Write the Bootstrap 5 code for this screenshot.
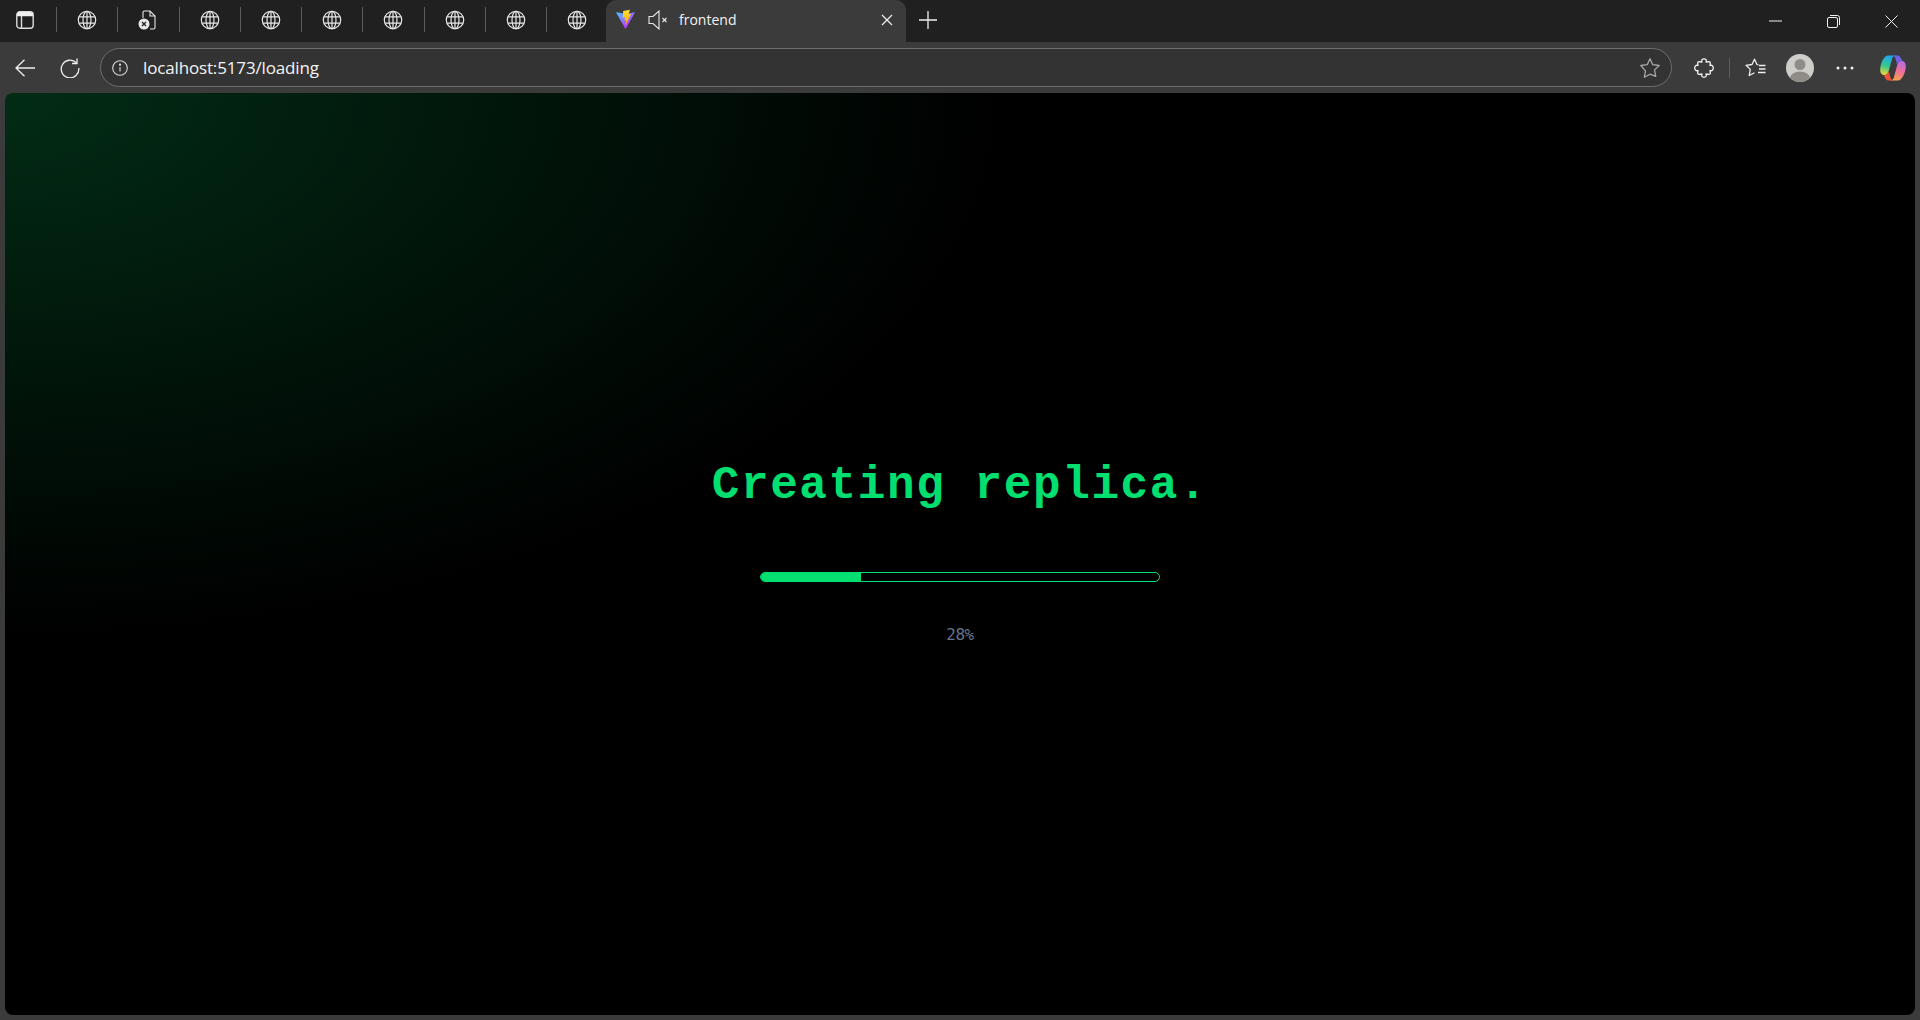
<!DOCTYPE html>
<html lang="en">
<head>
  <meta charset="UTF-8">
  <meta name="viewport" content="width=device-width, initial-scale=1.0">
  <title>frontend</title>
  <link href="https://cdn.jsdelivr.net/npm/bootstrap@5.3.0/dist/css/bootstrap.min.css" rel="stylesheet">
  <style>
    html, body { height: 100%; }
    body { background: #3b3b3b; overflow: hidden; font-family: "Open Sans", "Noto Sans", sans-serif; }
    svg { display: block; flex: none; }
    .browser { height: 1020px; }
    .tab-strip { height: 42px; background: #202020; }
    .slot-first { width: 56px; padding-right: 7px; }
    .slot { width: 60.25px; }
    .slot-sep { width: 1px; height: 25px; background: #5c5c5c; }
    .slot-end { width: 59px; }
    .strip-icon { margin-top: -3px; }
    .active-tab { width: 300px; height: 42px; background: #3b3b3b; border-radius: 10px 10px 0 0; padding: 0 13px 3px 9px; color: #f2f2f2; font-size: 14px; }
    .tab-mute { margin-left: 12px; }
    .tab-title { margin-left: 11px; }
    .new-tab { width: 44px; margin-top: -3px; }
    .win-btn { width: 58px; }
    .tool-strip { height: 51px; padding: 6px 0; }
    .back-btn { width: 50px; }
    .reload-btn { width: 40px; }
    .tool-btn { width: 45px; }
    .addr-bar { width: 1572px; height: 39px; margin: 0 9.5px 0 10px; background: #333; border: 1px solid #6e6e6e; border-radius: 20px; padding: 0 10px 0 11px; color: #f4f4f4; font-size: 17px; }
    .addr-text { margin-left: 15px; letter-spacing: -.15px; }
    .tool-sep { width: 1px; height: 20px; background: #5c5c5c; margin: 0 2.5px; }
    .copilot-btn { margin-left: 3px; }
    .viewport-box { width: 1910px; height: 922px; margin: 0 5px; padding-bottom: 1px; border-radius: 8px; background: radial-gradient(ellipse 1000px 545px at 0 0, #022c15 0%, #000 100%), #000; }
    .load-title { font-family: "Liberation Mono", monospace; font-weight: 700; font-size: 46px; letter-spacing: 1.6px; line-height: 48px; color: #00df6f; margin-bottom: 62px; }
    .load-track { width: 400px; height: 10px; background: #000; border: 1px solid #00df6f; border-radius: 5px; }
    .load-fill { background: #00df6f; }
    .load-pct { font-family: "DejaVu Sans Mono", monospace; font-size: 16px; letter-spacing: -.03em; line-height: 20px; color: #64748b; margin-top: 43px; }
  </style>
</head>
<body>
  <svg width="0" height="0" class="position-absolute">
    <defs>
      <symbol id="globe" viewBox="0 0 20 20">
        <g fill="none" stroke="#e8e8e8" stroke-width="1.2">
          <circle cx="10" cy="10" r="8.7"/>
          <ellipse cx="10" cy="10" rx="4" ry="8.7"/>
          <path d="M2.2 6.800h15.600M2.200 13.200h15.600M10 1.300v17.400"/>
        </g>
      </symbol>
      <linearGradient id="viteA" x1="2" y1="3" x2="18" y2="27" gradientUnits="userSpaceOnUse">
        <stop offset="0" stop-color="#41d1ff"/><stop offset="1" stop-color="#bd34fe"/>
      </linearGradient>
      <linearGradient id="viteB" x1="15" y1="1" x2="18" y2="24" gradientUnits="userSpaceOnUse">
        <stop offset="0" stop-color="#ffea83"/><stop offset=".08" stop-color="#ffdd35"/><stop offset="1" stop-color="#ffa800"/>
      </linearGradient>
      <linearGradient id="copA" x1="0.5" y1="0" x2="0.3" y2="1">
        <stop offset="0" stop-color="#1fa4f2"/><stop offset=".55" stop-color="#36c98a"/><stop offset="1" stop-color="#f2d43a"/>
      </linearGradient>
      <linearGradient id="copB" x1="0.7" y1="0" x2="0.4" y2="1">
        <stop offset="0" stop-color="#b56be8"/><stop offset=".5" stop-color="#f06f9a"/><stop offset="1" stop-color="#f7a24a"/>
      </linearGradient>
    </defs>
  </svg>

  <div class="browser d-flex flex-column">
    <div class="tab-strip d-flex align-items-center">
      <div class="slot-first strip-icon d-flex justify-content-center">
        <svg width="18" height="18" viewBox="0 0 18 18" fill="none" stroke="#dcdcdc" stroke-width="1.4"><rect x=".8" y=".8" width="16.4" height="16.4" rx="3"/><path d="M5.500 5v12"/><path d="M1 4c0-2 1-3 3-3h10c2 0 3 1 3 3v1.300H1z" fill="#f0f0f0" stroke="none"/></svg>
      </div>
      <div class="slot-sep strip-icon"></div>
      <div class="slot strip-icon d-flex justify-content-center"><svg width="20" height="20"><use href="#globe"/></svg></div>
      <div class="slot-sep strip-icon"></div>
      <div class="slot strip-icon d-flex justify-content-center">
        <svg width="20" height="20" viewBox="0 0 20 20" fill="none" stroke="#e8e8e8" stroke-width="1.1"><path d="M5 8V2.500A1.500 1.500 0 0 1 6.500 1h5.500l5 5v11.500a1.500 1.500 0 0 1-1.500 1.500H12"/><path d="M12 1v5h5"/><circle cx="6" cy="14" r="5.500" fill="#e8e8e8" stroke="none"/><path d="M4 12l4 4M8 12l-4 4" stroke="#202020" stroke-width="1.300"/></svg>
      </div>
      <div class="slot-sep strip-icon"></div>
      <div class="slot strip-icon d-flex justify-content-center"><svg width="20" height="20"><use href="#globe"/></svg></div>
      <div class="slot-sep strip-icon"></div>
      <div class="slot strip-icon d-flex justify-content-center"><svg width="20" height="20"><use href="#globe"/></svg></div>
      <div class="slot-sep strip-icon"></div>
      <div class="slot strip-icon d-flex justify-content-center"><svg width="20" height="20"><use href="#globe"/></svg></div>
      <div class="slot-sep strip-icon"></div>
      <div class="slot strip-icon d-flex justify-content-center"><svg width="20" height="20"><use href="#globe"/></svg></div>
      <div class="slot-sep strip-icon"></div>
      <div class="slot strip-icon d-flex justify-content-center"><svg width="20" height="20"><use href="#globe"/></svg></div>
      <div class="slot-sep strip-icon"></div>
      <div class="slot strip-icon d-flex justify-content-center"><svg width="20" height="20"><use href="#globe"/></svg></div>
      <div class="slot-sep strip-icon"></div>
      <div class="slot-end strip-icon d-flex justify-content-center"><svg width="20" height="20"><use href="#globe"/></svg></div>

      <div class="active-tab d-flex align-items-center">
        <svg width="21" height="21" viewBox="0 0 32 32"><path d="M29.8836 6.146L16.7418 29.6457c-.2714.4851-.9684.488-1.2439.0052L2.0956 6.1482c-.3-.5262.1498-1.1635.746-1.057l13.156 2.3516a.7144.7144 0 00.2537-.0004l12.8808-2.3478c.5942-.1083 1.0463.5241.7515 1.0513z" fill="url(#viteA)"/><path d="M22.2644 1.1021l-9.5259 1.8665c-.1535.0301-.2672.1614-.2764.3176l-.586 9.8966c-.0138.2331.2002.414.4279.3615l2.652-.612c.2482-.0572.4723.1613.4214.4111l-.7879 3.858c-.053.2596.1907.4815.4443.4046l1.638-.4976c.2539-.0771.4978.1455.4442.4053l-1.2521 6.0603c-.0783.3791.4259.5858.6362.2608l.1405-.2169 7.7616-15.4894c.13-.2594-.0942-.5551-.3789-.5001l-2.7297.5268c-.2565.0494-.4748-.1894-.4024-.4404l1.7817-6.1758c.0725-.2514-.1465-.4905-.4033-.4399z" fill="url(#viteB)"/></svg>
        <svg class="tab-mute" width="20" height="20" viewBox="0 0 20 20" fill="none" stroke="#e8e8e8" stroke-width="1.100"><path d="M1 6.500h4L11 1v18l-6-5.500H1z"/><path d="M14.500 8l4 4M18.500 8l-4 4"/></svg>
        <span class="tab-title flex-grow-1">frontend</span>
        <svg width="12" height="12" viewBox="0 0 12 12" stroke="#f0f0f0" stroke-width="1.200"><path d="M1 1l10 10M11 1L1 11"/></svg>
      </div>
      <div class="new-tab d-flex justify-content-center">
        <svg width="18" height="18" viewBox="0 0 18 18" stroke="#f0f0f0" stroke-width="1.300"><path d="M0 9h18M9 0v18"/></svg>
      </div>
      <div class="flex-grow-1"></div>
      <div class="win-btn d-flex justify-content-center"><svg width="13" height="2" viewBox="0 0 13 2" stroke="#f0f0f0"><path d="M0 1h13"/></svg></div>
      <div class="win-btn d-flex justify-content-center"><svg width="13" height="13" viewBox="0 0 13 13" fill="none" stroke="#f0f0f0"><rect x=".5" y="2.500" width="10" height="10" rx="1.500"/><path d="M3 .5h7.500a2 2 0 0 1 2 2V10"/></svg></div>
      <div class="win-btn d-flex justify-content-center"><svg width="13" height="13" viewBox="0 0 13 13" stroke="#f0f0f0"><path d="M.5.5l12 12M12.500.5l-12 12"/></svg></div>
    </div>

    <div class="tool-strip d-flex align-items-center">
      <div class="back-btn d-flex justify-content-center">
        <svg width="20" height="18" viewBox="0 0 20 18" fill="none" stroke="#f0f0f0" stroke-width="1.300"><path d="M20 9H1M9.500.7L1 9l8.500 8.300"/></svg>
      </div>
      <div class="reload-btn d-flex justify-content-center">
        <svg width="20" height="20" viewBox="0 0 20 20" fill="none" stroke="#f0f0f0" stroke-width="1.300"><path d="M16.500 5A8.800 8.800 0 1 0 18.800 10"/><path d="M17 .5V5.500h-5"/></svg>
      </div>
      <div class="addr-bar d-flex align-items-center">
        <svg width="16" height="16" viewBox="0 0 16 16" fill="none" stroke="#d8d8d8" stroke-width="1.100"><circle cx="8" cy="8" r="7.300"/><path d="M8 7v4.500"/><circle cx="8" cy="4.700" r=".6" fill="#d8d8d8"/></svg>
        <span class="addr-text flex-grow-1">localhost:5173/loading</span>
        <svg width="22" height="22" viewBox="0 0 22 22" fill="none" stroke="#a8a8a8" stroke-width="1.300"><path d="M11 1.800l2.800 5.900 6.400.8-4.700 4.400 1.200 6.400L11 17.200l-5.700 3.100 1.200-6.400L1.800 8.500l6.400-.8z" stroke-linejoin="round"/></svg>
      </div>
      <div class="tool-btn d-flex justify-content-center">
        <svg width="20" height="20" viewBox="0 0 20 20" fill="none" stroke="#f0f0f0" stroke-width="1.300" stroke-linejoin="round"><path d="M8 4C6.800 2 8.500.8 10 .8S13.200 2 12 4l3-.3q1.500 0 1.300 1.800L16 7.500c2-1 3.300 1 3.300 2.500S18 13.500 16 12.500l.3 2q.2 1.800-1.300 1.800l-3-.3c1.200 2-.5 3.300-2 3.300S6.800 18 8 16l-3 .3q-1.500 0-1.300-1.800l.3-2C2 13.500.7 11.500.7 10S2 6.500 4 7.500l-.3-2Q3.500 3.700 5 3.700z"/></svg>
      </div>
      <div class="tool-sep"></div>
      <div class="tool-btn d-flex justify-content-center">
        <svg width="21" height="20" viewBox="0 0 21 20" fill="none" stroke="#f0f0f0" stroke-width="1.300" stroke-linejoin="round"><path d="M13.500 7L12 6.500 9.500 1.200 7 6.500l-6 .8 4.300 4.100-1.100 6.100 5.300-2.800"/><path d="M14 7.500h6.500M14 11h6.500M13 14.500h7.500"/></svg>
      </div>
      <div class="tool-btn d-flex justify-content-center">
        <svg width="28" height="28" viewBox="0 0 28 28"><defs><clipPath id="avatarClip"><circle cx="14" cy="14" r="14"/></clipPath></defs><circle cx="14" cy="14" r="14" fill="#cfcdc9"/><g clip-path="url(#avatarClip)" fill="#8f8c88"><circle cx="14" cy="10.500" r="5.500"/><ellipse cx="14" cy="24.500" rx="10" ry="7"/></g></svg>
      </div>
      <div class="tool-btn d-flex justify-content-center">
        <svg width="18" height="4" viewBox="0 0 18 4" fill="#f0f0f0"><circle cx="2" cy="2" r="1.500"/><circle cx="9" cy="2" r="1.500"/><circle cx="16" cy="2" r="1.500"/></svg>
      </div>
      <div class="tool-btn copilot-btn d-flex justify-content-center">
        <svg width="28" height="28" viewBox="0 0 28 28"><path d="M13 1.500h5c2.500 0 4 1.500 5 5.500-2.500 0-4 1-5 4l-1-5C16.500 3.500 15 1.500 13 1.500z" fill="#6f62e4"/><path d="M15 26.500h-5c-2.500 0-4-1.500-5-5.500 2.500 0 4-1 5-4l1 5c.5 2.500 2 4.500 4 4.500z" fill="#ef5138"/><path d="M9 1.500h8C14.500 1.500 13.500 3 13 5l-3 11c-.8 3-2 5-5 5-2.500 0-4-2.500-3.800-6C1.600 9 5 1.500 9 1.500z" fill="url(#copA)"/><path d="M19 26.500h-8c2.500 0 3.500-1.500 4-3.500l3-11c.8-3 2-5 5-5 2.500 0 4 2.500 3.800 6-.4 6-3.800 13.500-7.800 13.500z" fill="url(#copB)"/></svg>
      </div>
    </div>

    <div class="viewport-box d-flex flex-column align-items-center justify-content-center">
      <div class="load-title">Creating replica.</div>
      <div class="progress load-track" role="progressbar" aria-valuenow="28" aria-valuemin="0" aria-valuemax="100">
        <div class="progress-bar load-fill" style="width: 25%"></div>
      </div>
      <div class="load-pct">28%</div>
    </div>
  </div>

  <script src="https://cdn.jsdelivr.net/npm/bootstrap@5.3.0/dist/js/bootstrap.bundle.min.js"></script>
</body>
</html>
